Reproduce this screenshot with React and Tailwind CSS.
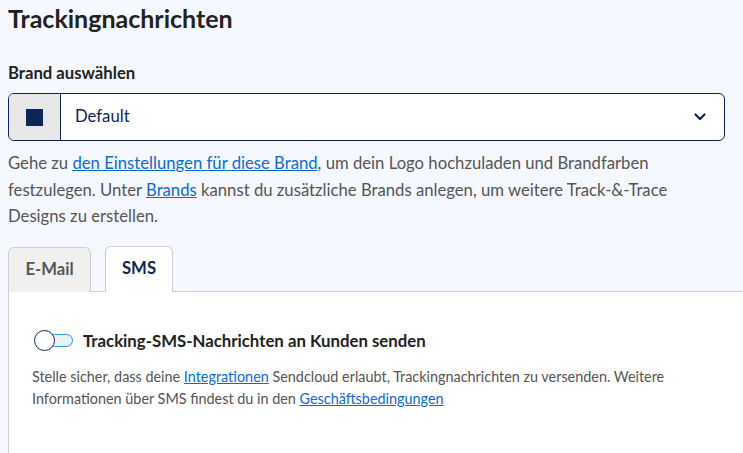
import React from "react";

export default function App() {
  return (
    <div
      className="w-[743px] h-[453px] overflow-hidden bg-[#f5f9ff] text-[#222]"
      style={{ fontFamily: "Lato, 'Noto Sans', sans-serif" }}
    >
      <div className="pl-2">
        <h1 className="text-[25px] leading-[30px] font-bold pt-[3px] text-[#222]">Trackingnachrichten</h1>
        <div className="mt-[30px] text-[16.7px] leading-[20px] font-bold text-[#222]">Brand auswählen</div>
        <div className="mt-[10px] mr-[18px] flex h-[48px] rounded-[6px] border border-[#0b2253] bg-white overflow-hidden">
          <div className="w-[52px] flex items-center justify-center bg-[#e8e8e8] border-r border-[#0b2253]">
            <div className="w-[17px] h-[17px] bg-[#0d2557]"></div>
          </div>
          <div className="flex-1 flex items-center pl-[14px] text-[16.7px] text-[#0d2557]">Default</div>
          <div className="flex items-center pr-[18px]">
            <svg width="12" height="8" viewBox="0 0 12 8" fill="none">
              <path d="M1.5 1.5 L6 6 L10.5 1.5" stroke="#0d2557" strokeWidth="2.2" strokeLinecap="round" strokeLinejoin="round" />
            </svg>
          </div>
        </div>
        <p className="mt-[9px] text-[16.7px] leading-[26.5px] text-[#555] pr-[40px]">
          Gehe zu <a className="text-[#0a6cd4] underline">den Einstellungen für diese Brand</a>, um dein Logo hochzuladen und Brandfarben festzulegen. Unter <a className="text-[#0a6cd4] underline">Brands</a> kannst du zusätzliche Brands anlegen, um weitere Track-&amp;-Trace Designs zu erstellen.
        </p>
        <div className="mt-[16px] flex items-end">
          <div className="w-[83px] h-[45px] flex items-center justify-center rounded-t-[6px] border border-b-0 border-[#cfcfcf] bg-[#f0f0f0] text-[16.7px] font-bold text-[#555]">E-Mail</div>
          <div className="w-[14px] h-[45px] border-b border-[#cfcfcf]"></div>
          <div className="w-[68px] h-[46px] flex items-center justify-center rounded-t-[6px] border border-b-0 border-[#cfcfcf] bg-white text-[16.7px] font-bold text-[#0d2557]">SMS</div>
          <div className="flex-1 border-b border-[#cfcfcf]"></div>
        </div>
        <div className="h-[200px] bg-white border-l border-[#cfcfcf] pl-[23px] pt-[36px]">
          <div className="flex items-center">
            <div className="relative w-[41px] h-[21px]">
              <div className="absolute left-[16px] top-[4px] w-[25px] h-[13px] rounded-full border border-[#3b8be0] bg-[#e6f2fd]"></div>
              <div className="absolute left-[2px] top-0 w-[21px] h-[21px] rounded-full border-[1.5px] border-[#0d2557] bg-white"></div>
            </div>
            <span className="ml-[10px] text-[16.8px] font-bold text-[#222]">Tracking-SMS-Nachrichten an Kunden senden</span>
          </div>
          <p className="mt-[13px] text-[14.4px] leading-[22px] text-[#555] pr-[20px]">
            Stelle sicher, dass deine <a className="text-[#0a6cd4] underline">Integrationen</a> Sendcloud erlaubt, Trackingnachrichten zu versenden. Weitere Informationen über SMS findest du in den <a className="text-[#0a6cd4] underline">Geschäftsbedingungen</a>
          </p>
        </div>
      </div>
    </div>
  );
}
